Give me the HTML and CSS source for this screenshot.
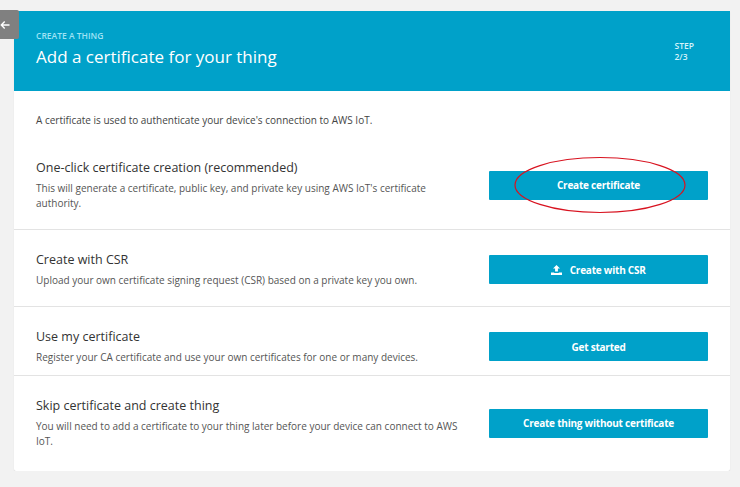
FILE: index.html
```html
<!DOCTYPE html>
<html lang="en">
<head>
  <meta charset="UTF-8" />
  <title>Add a certificate for your thing</title>
  <link rel="stylesheet" href="styles.css">
</head>
<body>

<a class="back" href="#back" aria-label="Back">
  <svg width="10" height="10" viewBox="0 0 10 10"><path d="M9.5 5H1.5M4.7 1.6L1.3 5l3.4 3.4" fill="none" stroke="#fff" stroke-width="1.4"/></svg>
</a>

<main class="card">
  <header class="card-head">
    <div>
      <p class="crumb">CREATE A THING</p>
      <h1>Add a certificate for your thing</h1>
    </div>
    <p class="step">STEP<br>2/3</p>
  </header>

  <p class="intro">A certificate is used to authenticate your device's connection to AWS IoT.</p>

  <section class="row row-first">
    <div class="row-text">
      <h2>One-click certificate creation (recommended)</h2>
      <p>This will generate a certificate, public key, and private key using AWS IoT's certificate authority.</p>
    </div>
    <button class="btn">Create certificate</button>
  </section>

  <section class="row">
    <div class="row-text">
      <h2>Create with CSR</h2>
      <p>Upload your own certificate signing request (CSR) based on a private key you own.</p>
    </div>
    <button class="btn">
      <svg class="btn-icon" width="11" height="10" viewBox="0 0 11 10"><path d="M5.5 0L9 3.4H6.9V6.6H4.1V3.4H2zM0 7.4h3.2v.6h4.6v-.6H11V10H0z" fill="#fff"/></svg>
      Create with CSR
    </button>
  </section>

  <section class="row row-short">
    <div class="row-text">
      <h2>Use my certificate</h2>
      <p>Register your CA certificate and use your own certificates for one or many devices.</p>
    </div>
    <button class="btn">Get started</button>
  </section>

  <section class="row row-last">
    <div class="row-text">
      <h2>Skip certificate and create thing</h2>
      <p>You will need to add a certificate to your thing later before your device can connect to AWS IoT.</p>
    </div>
    <button class="btn">Create thing without certificate</button>
  </section>
</main>

<!-- red marker drawn over the screenshot -->
<svg class="marker" width="176" height="60" viewBox="0 0 176 60">
  <ellipse cx="88" cy="30" rx="85" ry="27.5" fill="none" stroke="#d8121f" stroke-width="1.2"/>
</svg>

</body>
</html>
```

FILE: styles.css
```css
body {
  font-family: "Open Sans", Arial, sans-serif;
  margin: 0;
  padding: 11px 10.5px 0 13.5px;
  background: #f2f2f2;
  color: #444;
}
.back {
  position: absolute;
  left: 0;
  top: 10px;
  width: 19px;
  height: 29px;
  background: #808080;
  border-radius: 0 2px 2px 0;
  display: flex;
  align-items: center;
}
.card {
  background: #fff;
  box-shadow: 0 1px 1px rgba(0, 0, 0, 0.12);
  border-radius: 0 0 2px 2px;
}
.card-head {
  background: #00a1c9;
  color: #fff;
  height: 80px;
  box-sizing: border-box;
  padding: 19px 36px 0 22.5px;
  display: flex;
  justify-content: space-between;
}
.crumb {
  margin: 0;
  font-size: 8.5px;
  line-height: 11px;
  font-weight: 600;
  color: #9fe3f5;
}
h1 {
  margin: 4px 0 0;
  font-size: 17px;
  line-height: 24px;
  font-weight: 400;
}
.step {
  margin: 11px 0 0;
  width: 19px;
  font-size: 8.5px;
  line-height: 10.5px;
  font-weight: 600;
  color: #d5f3fb;
}
.intro {
  margin: 0;
  padding: 23px 22.5px 0;
  font-size: 10px;
  line-height: 13px;
}
.row {
  display: flex;
  align-items: center;
  justify-content: space-between;
  padding: 21px 21.5px 18px 22.5px;
  border-bottom: 1px solid #e3e3e3;
}
.row-first {
  padding-top: 32px;
}
.row-short {
  padding-bottom: 10px;
}
.row-last {
  padding-bottom: 22px;
  border-bottom: 0;
}
.row-text {
  width: 430px;
}
h2 {
  margin: 0 0 5px;
  font-size: 12.5px;
  line-height: 17px;
  font-weight: 400;
  color: #333;
}
.row-text p {
  margin: 0;
  font-size: 10px;
  line-height: 15px;
  color: #555;
}
.btn {
  width: 219px;
  height: 29px;
  flex: none;
  border: 0;
  border-radius: 1px;
  background: #00a1c9;
  color: #fff;
  font: 700 10px "Open Sans", Arial, sans-serif;
  letter-spacing: -0.22px;
  padding: 0;
}
.btn-icon {
  vertical-align: -1px;
  margin-right: 5px;
}
.marker {
  position: absolute;
  left: 512px;
  top: 155px;
}
```
